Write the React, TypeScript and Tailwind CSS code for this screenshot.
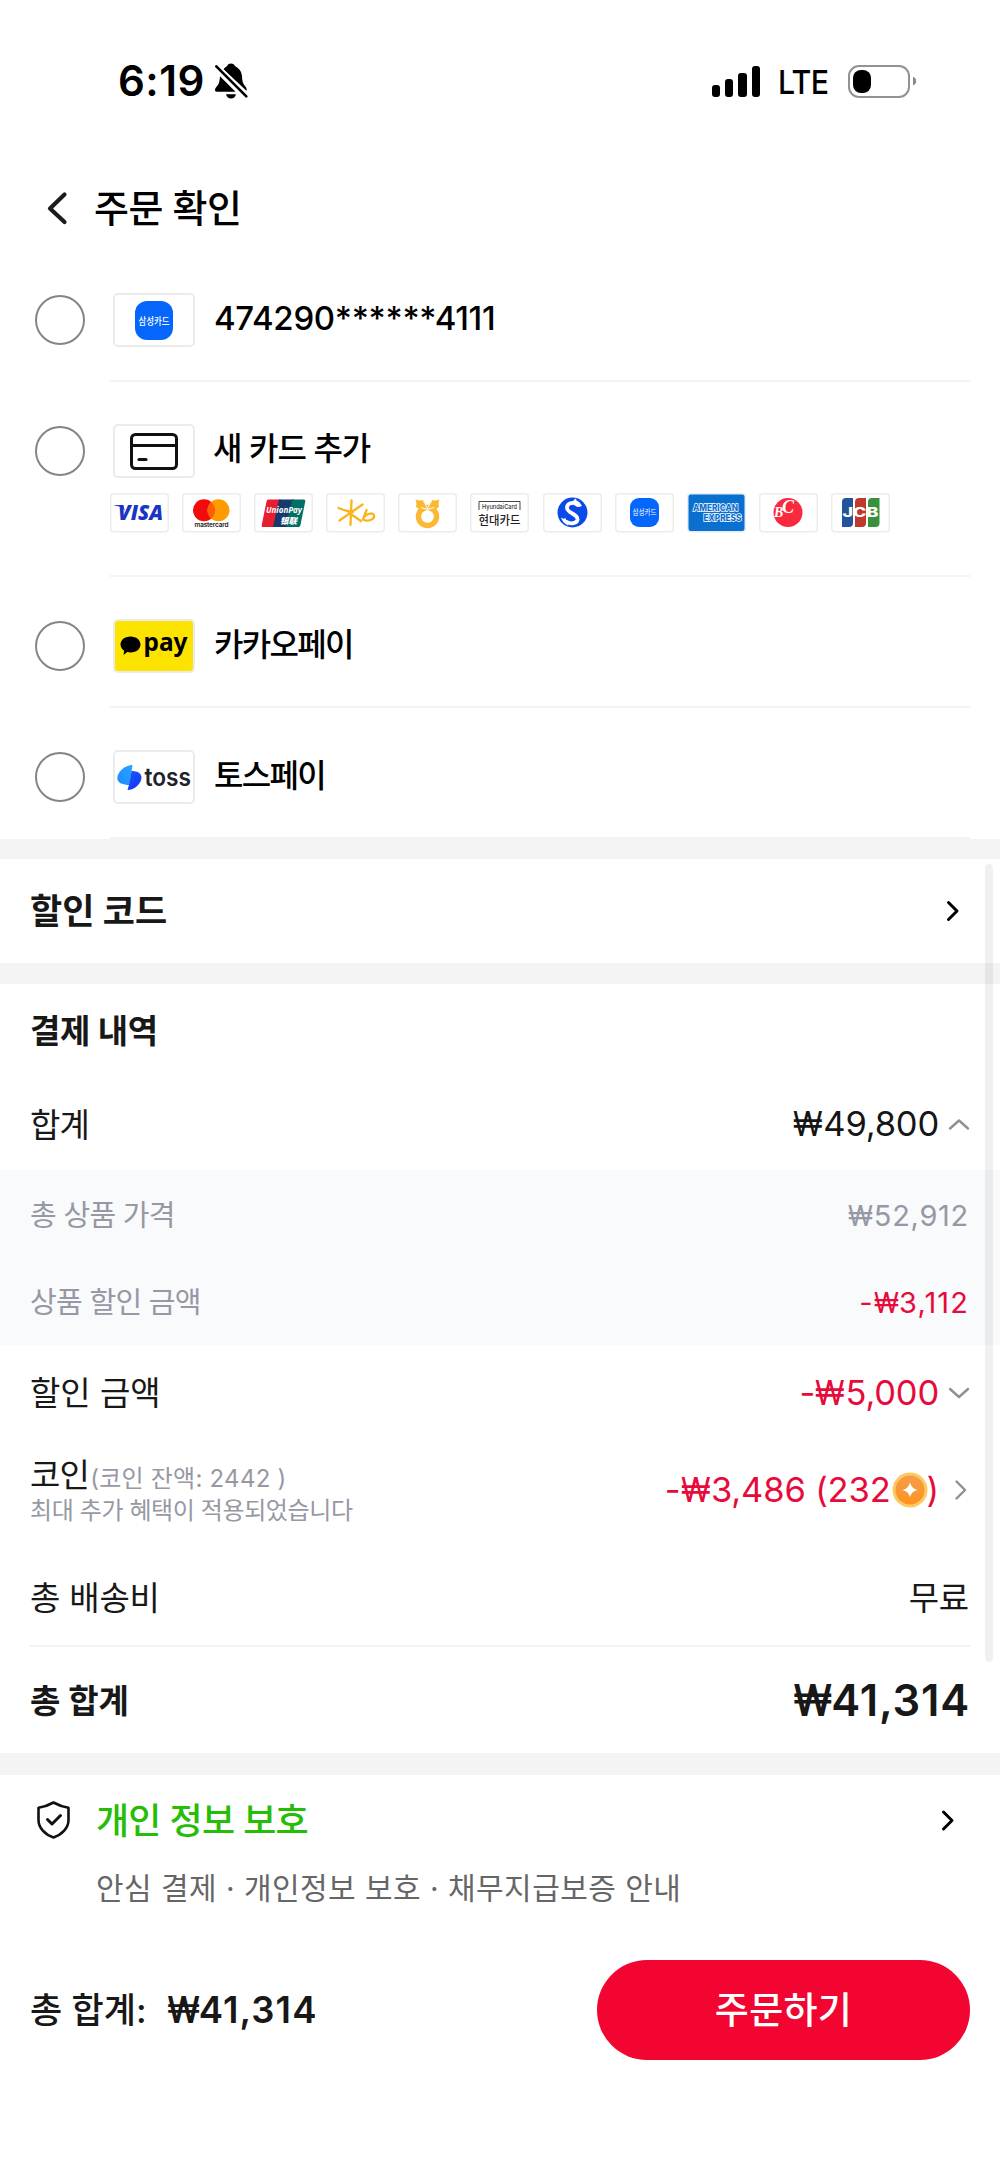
import React from "react";

const KR = "font-['Inter','Noto_Sans_CJK_KR',sans-serif]";

function Chevron({ dir, className }: { dir: "left" | "right" | "up" | "down"; className: string }) {
  const d = {
    left: "M16.5 1.5 L2 15.5 L16.5 29",
    right: "M1.5 1.5 L10 10 L1.5 18.5",
    up: "M1 9.5 L10 1.5 L19 9.5",
    down: "M1 1 L10 9 L19 1",
  }[dir];
  const box = { left: "0 0 18 31", right: "0 0 12 20", up: "0 0 20 11", down: "0 0 20 11" }[dir];
  return (
    <svg viewBox={box} className={`overflow-visible ${className}`} fill="none" stroke="currentColor" strokeLinecap="round" strokeLinejoin="round">
      <path d={d} />
    </svg>
  );
}

/* Korean won sign, drawn a little narrower than the font's own glyph */
function Won() {
  return <span className="inline-block w-[0.880em] origin-left scale-x-[0.900]">₩</span>;
}

function StatusBar() {
  return (
    <div className="flex h-[162px] items-center pr-[84px] pl-[118px] text-black">
      <span className="text-[42px] font-semibold leading-none tracking-[0.500px]">6:19</span>
      <svg viewBox="0 0 34 36" className="ml-[9px] h-[36px] w-[34px]" fill="currentColor">
        <path d="M9.5 6.2C11 4.3 12.600 3.700 13.200 2.800C14 1.200 15.200.5 17 .5s3 .7 3.800 2.300c.5.9 6.700 3 7.200 10.500c.2 4 .6 6.200 1.700 8c1 1.500 3 3.200 3 5.200c0 .5-.1.8-.3 1.200z" />
        <path d="M6 13.300L21.500 28.700H3C1.500 28.700 1 27.900 1 27c0-2.600 2.400-3.600 3.500-6c.9-2 1.200-4 1.500-7.700z" />
        <path d="M12 31.200h10c-.6 2.700-2.500 4.300-5 4.300s-4.400-1.600-5-4.300z" />
        <path d="M2.300 3.300L32.300 33.300" stroke="white" strokeWidth="5.500" />
        <path d="M2.300 3.300L32.300 33.300" stroke="currentColor" strokeWidth="2.600" strokeLinecap="round" />
      </svg>
      <div className="ml-auto flex items-center">
        <div className="flex h-[31px] items-end gap-[4.800px]">
          <i className="h-[12px] w-[8.500px] rounded-[3px] bg-black" />
          <i className="h-[17.500px] w-[8.500px] rounded-[3px] bg-black" />
          <i className="h-[24px] w-[8.500px] rounded-[3px] bg-black" />
          <i className="h-[31px] w-[8.500px] rounded-[3px] bg-black" />
        </div>
        <span className="mt-[3px] ml-[18px] w-[70px]">
          <span className="inline-block origin-left scale-x-[0.920] text-[33px] font-medium leading-none tracking-[-0.800px]">LTE</span>
        </span>
        <div className="flex h-[33px] w-[62px] items-center rounded-[11px] border-2 border-[#929292] pl-[3px]">
          <i className="h-[23px] w-[18px] rounded-[8px] bg-black" />
        </div>
        <svg viewBox="0 0 4 10" className="ml-[2.500px] h-[10px] w-[3.500px]" fill="#8a8a8a">
          <path d="M0 0C5 1.500 5 8.500 0 10z" />
        </svg>
      </div>
    </div>
  );
}

function LogoBox({ children, className = "" }: { children: React.ReactNode; className?: string }) {
  return (
    <div className={`ml-[28px] flex h-[54px] w-[82px] shrink-0 items-center justify-center rounded-[5px] border-2 border-[#ebebeb] ${className}`}>
      {children}
    </div>
  );
}

function PayRow({ logo, label, children }: { logo: React.ReactNode; label: React.ReactNode; children?: React.ReactNode }) {
  return (
    <div className={children ? "h-[195px]" : "h-[131px]"}>
      <div className="flex h-[96px] items-center pt-[42px] pl-[35px]">
        <span className="size-[50px] shrink-0 rounded-full border-2 border-[#858585]" />
        {logo}
        {label}
      </div>
      <div className={`ml-[110px] mr-[30px] border-b-2 border-[#f4f4f4] ${children ? "h-[99px] pt-[15px]" : "h-[35px]"}`}>{children}</div>
    </div>
  );
}

function Brand({ children, bare }: { children: React.ReactNode; bare?: boolean }) {
  return (
    <svg viewBox="0 0 59 39.500" className="h-[39.500px] w-[59px] overflow-visible">
      <rect x="0.750" y="0.750" width="57.500" height="38" rx="3" fill={bare ? "#0a70cf" : "white"} stroke={bare ? "#e4eef8" : "#ececec"} strokeWidth="1.500" />
      {children}
    </svg>
  );
}

function Brands() {
  return (
    <div className="flex gap-[13.100px]">
      <Brand>
        <text x="8" y="26.500" textLength="45" lengthAdjust="spacingAndGlyphs" fontFamily="Open Sans" fontWeight="800" fontStyle="italic" fontSize="21" fill="#1a34c4">VISA</text>
        <path d="M4.500 12h8.500l2 6C12.500 14.500 9 13 4.500 12.600z" fill="#1a34c4" />
      </Brand>
      <Brand>
        <circle cx="22" cy="17.300" r="11" fill="#f50a0c" />
        <circle cx="36.500" cy="17.300" r="11" fill="#ff9a00" />
        <path d="M29.250 9a11 11 0 0 1 0 16.600a11 11 0 0 1 0-16.600z" fill="#ff5c05" />
        <text x="12.500" y="33.500" textLength="34" fontFamily="Inter" fontWeight="600" fontSize="6.500" fill="#222">mastercard</text>
      </Brand>
      <Brand>
        <path d="M14.500 6.500H27L21 34H9.500c-1.500 0-2-1-1.700-2.300L12.500 8.500c.3-1.300 1-2 2-2z" fill="#e61e2f" />
        <path d="M25 6.500H40L34 34H19z" fill="#15396b" />
        <path d="M38 6.500h11.500c1.500 0 2 1 1.700 2.300L46.500 31.700c-.3 1.500-1 2.300-2.200 2.300H32z" fill="#007066" />
        <text x="12" y="19.500" textLength="36" lengthAdjust="spacingAndGlyphs" fontFamily="Open Sans" fontWeight="700" fontStyle="italic" fontSize="9.500" fill="white">UnionPay</text>
        <text x="26" y="30.500" textLength="17" lengthAdjust="spacingAndGlyphs" fontFamily="Noto Sans CJK SC" fontWeight="900" fontStyle="italic" fontSize="8.500" fill="white">银联</text>
      </Brand>
      <Brand>
        <g fill="none" stroke="#fbb41a" strokeWidth="2.300" strokeLinecap="round" strokeLinejoin="round">
          <path d="M25.500 7.500L24.500 32M12.500 15C18 17.500 23 18.500 27 19M36.500 11.500L13.500 27.500M23 20L35 28M40.500 17L37 26.500C43 29.500 49 25.500 48 22.500C47 19.500 42 20 38.500 23.500" />
        </g>
      </Brand>
      <Brand>
        <circle cx="29.500" cy="23.500" r="9" fill="none" stroke="#fbb933" strokeWidth="5.500" />
        <path d="M17.500 6.500c3.500 1.300 6 1 7.500.2l4.500 7 4.500-7c2 .8 4 1.100 7.500-.2-1 2.500-1 5-.5 7.500L38 16H21l-3-2c.5-2.500.5-5-.5-7.500z" fill="#fbb933" />
        <path d="M24.500 6l5 9.500 5-9.500M23 14.500l6.500 2 6.500-2" fill="none" stroke="white" strokeWidth="1" />
        <circle cx="29.500" cy="23.500" r="6" fill="white" />
      </Brand>
      <Brand>
        <path d="M9 17V8.500H50V17" fill="none" stroke="#444" strokeWidth="1" />
        <text x="12" y="16" textLength="35" lengthAdjust="spacingAndGlyphs" fontFamily="Inter" fontWeight="500" fontSize="6.500" fill="#333">HyundaiCard</text>
        <text x="8.500" y="31.500" textLength="42" lengthAdjust="spacingAndGlyphs" fontFamily="Noto Sans CJK KR" fontWeight="500" fontSize="12" fill="#222">현대카드</text>
      </Brand>
      <Brand>
        <circle cx="29.500" cy="19.500" r="15" fill="#0a4ae8" />
        <path d="M34.500 12C30 7.500 22 11 24.500 16.500C26.500 20.500 35 21.500 34.500 26.500C34 30.500 28 31.500 24 29" fill="none" stroke="white" strokeWidth="3.800" strokeLinecap="round" />
        <path d="M29 9.500c2-3 3-3.500 4-4l.5 2c2 .5 4 2.500 5.500 5.500l-3 1-3.500-1.500zM18 24.500l3 1.500 1-1.500 1.500 3 3 1-1.500 4c-3.500-1.500-6-4.500-7-8z" fill="white" />
      </Brand>
      <Brand>
        <rect x="15" y="5" width="29" height="29" rx="9" fill="#0566fb" />
        <text x="17.500" y="22.300" textLength="24" lengthAdjust="spacingAndGlyphs" fontSize="7.500" fill="white" fontFamily="Noto Sans CJK KR">삼성카드</text>
      </Brand>
      <Brand bare>
        <text x="6" y="17.500" textLength="45" lengthAdjust="spacingAndGlyphs" fontFamily="Inter" fontWeight="800" fontSize="9" fill="#0a70cf" stroke="white" strokeWidth="1.500" paintOrder="stroke">AMERICAN</text>
        <text x="16.500" y="28" textLength="38" lengthAdjust="spacingAndGlyphs" fontFamily="Inter" fontWeight="800" fontSize="9" fill="#0a70cf" stroke="white" strokeWidth="1.500" paintOrder="stroke">EXPRESS</text>
      </Brand>
      <Brand>
        <circle cx="29" cy="19.500" r="14.500" fill="#f9293e" />
        <text x="15" y="24" fontFamily="Liberation Serif" fontWeight="700" fontStyle="italic" fontSize="14" fill="white">B</text>
        <text x="23" y="20" fontFamily="Liberation Serif" fontWeight="700" fontStyle="italic" fontSize="18" fill="white">C</text>
      </Brand>
      <Brand>
        <path d="M15 5h7v25q0 4-4 4h-7V9q0-4 4-4z" fill="#24539a" />
        <path d="M28 5h7v25q0 4-4 4h-7V9q0-4 4-4z" fill="#bf3a2d" />
        <path d="M41 5h7.500v25q0 4-4 4H37V9q0-4 4-4z" fill="#37913e" />
        <text x="11.500" y="24" textLength="36" lengthAdjust="spacingAndGlyphs" fontFamily="Inter" fontWeight="800" fontSize="12.500" fill="white">JCB</text>
      </Brand>
    </div>
  );
}

function Band({ className }: { className: string }) {
  return <div className={`bg-[#f4f4f4] ${className}`} />;
}

function Coin() {
  return (
    <svg viewBox="0 0 36 36" className="mr-[-1px] ml-[1px] size-[36px]">
      <defs>
        <linearGradient id="coin" x1="0" y1="0" x2="0" y2="1">
          <stop offset="0" stopColor="#f79c4a" />
          <stop offset="1" stopColor="#fd9321" />
        </linearGradient>
      </defs>
      <circle cx="18" cy="18" r="17.500" fill="#fcca60" />
      <circle cx="18" cy="18" r="14.500" fill="url(#coin)" />
      <path d="M18 10.500Q19.300 16.700 25.500 18Q19.300 19.300 18 25.500Q16.700 19.300 10.500 18Q16.700 16.700 18 10.500z" fill="white" />
    </svg>
  );
}

export default function App() {
  return (
    <div className={`relative h-[2174px] w-[1000px] overflow-hidden bg-white text-[#181818] whitespace-nowrap leading-none ${KR}`}>
      <StatusBar />
      <header className="flex h-[89px] items-center pl-[48px] text-black">
        <Chevron dir="left" className="mt-[4px] h-[31px] w-[18px] stroke-[4.200] text-[#1c1c1c]" />
        <h1 className="mt-[3px] ml-[28px] text-[38px] font-medium tracking-[-0.500px]">주문 확인</h1>
      </header>

      <section className="text-black">
        <PayRow
          logo={
            <LogoBox>
              <svg viewBox="0 0 38 39" className="h-[39px] w-[38px] overflow-visible">
                <rect width="38" height="39" rx="12" fill="#0566fb" />
                <text x="3.500" y="23.500" textLength="31" lengthAdjust="spacingAndGlyphs" fontSize="10" fontWeight="500" fill="white" fontFamily="Noto Sans CJK KR">삼성카드</text>
              </svg>
            </LogoBox>
          }
          label={<span className="-mt-[4px] ml-[19px] text-[33px] font-medium tracking-[-0.300px]">474290******4111</span>}
        />
        <PayRow
          logo={
            <LogoBox>
              <svg viewBox="0 0 48 37" className="h-[37px] w-[48px]" fill="none" stroke="#111" strokeLinecap="round">
                <rect x="1.500" y="1.500" width="45" height="34" rx="4" strokeWidth="3" />
                <path d="M2 12.500H46" strokeWidth="3" />
                <path d="M9 26.500H16" strokeWidth="3.200" />
              </svg>
            </LogoBox>
          }
          label={<span className="-mt-[4px] ml-[18px] text-[32px] font-medium tracking-[-1px]">새 카드 추가</span>}
        >
          <Brands />
        </PayRow>
        <PayRow
          logo={
            <LogoBox className="bg-[#fde400]">
              <svg viewBox="0 0 78 50" className="h-[50px] w-[78px] overflow-visible">
                <path d="M15.500 15.500c5.800 0 10 3.600 10 8s-4.200 8-10 8c-1.100 0-2.200-.1-3.200-.4L8.500 34l.7-4.200C7 28.300 5.500 26 5.500 23.500c0-4.400 4.200-8 10-8z" fill="black" />
                <text x="28.500" y="30" textLength="44" lengthAdjust="spacingAndGlyphs" fontFamily="Noto Sans" fontWeight="700" fontSize="25" fill="black">pay</text>
              </svg>
            </LogoBox>
          }
          label={<span className="-mt-[3px] ml-[19px] text-[32px] font-medium tracking-[-1.700px]">카카오페이</span>}
        />
        <PayRow
          logo={
            <LogoBox>
              <svg viewBox="0 0 78 50" className="h-[50px] w-[78px] overflow-visible">
                <defs>
                  <linearGradient id="tossA" x1="0" y1="1" x2="1" y2="0"><stop stopColor="#1d8bff" /><stop offset="1" stopColor="#2aa4ff" /></linearGradient>
                  <linearGradient id="tossB" x1="0" y1="0" x2="0.500" y2="1"><stop stopColor="#0f5cff" /><stop offset="1" stopColor="#1a35f5" /></linearGradient>
                </defs>
                <path d="M17.500 13L14.500 33C8 33 2.300 31 2.300 26C2.300 20 10 13.200 17.500 13z" fill="url(#tossA)" />
                <path d="M16.500 19C22 19 26.500 21 26.500 25.500C26.500 31.500 19.500 38 12.500 38L14.500 31z" fill="url(#tossB)" />
                <text x="29.500" y="33.500" textLength="46.500" lengthAdjust="spacingAndGlyphs" fontFamily="Inter" fontWeight="600" fontSize="24.500" fill="#20232b">toss</text>
              </svg>
            </LogoBox>
          }
          label={<span className="-mt-[3px] ml-[19px] text-[32px] font-medium tracking-[-1.700px]">토스페이</span>}
        />
      </section>

      <Band className="h-[20px]" />
      <section className="flex h-[104px] items-center justify-between pr-[41px] pl-[30px]">
        <h2 className="text-[35px] font-bold">할인 코드</h2>
        <Chevron dir="right" className="h-[20px] w-[12px] stroke-[3] text-black" />
      </section>
      <Band className="h-[21px]" />

      <section>
        <h2 className="flex h-[93px] items-center pt-[2px] pl-[30px] text-[33px] font-bold tracking-[-0.300px]">결제 내역</h2>
        <div className="flex h-[93px] items-center justify-between pr-[31px] pl-[30px]">
          <span className="mt-[3px] text-[33px] tracking-[-0.800px]">합계</span>
          <span className="flex items-center pt-[2px] text-[34.500px] tracking-[-0.200px] text-[#151515]">
            <Won />49,800
            <Chevron dir="up" className="ml-[10px] h-[11px] w-[20px] stroke-[2.400] text-[#8d8f99]" />
          </span>
        </div>
        <div className="bg-[#f8fafc] pr-[31px] pl-[30px] text-[#9698a4]">
          <div className="flex h-[87.500px] items-center justify-between pt-[3px] text-[29px]">
            <span className="tracking-[-0.700px]">총 상품 가격</span>
            <span className="tracking-[0.700px]"><Won />52,912</span>
          </div>
          <div className="flex h-[87.500px] items-center justify-between pt-[3px] text-[29px]">
            <span className="tracking-[-0.700px]">상품 할인 금액</span>
            <span className="tracking-[1.100px] text-[#e60b3a]">-<Won />3,112</span>
          </div>
        </div>
        <div className="flex h-[96px] items-center justify-between pr-[31px] pl-[30px]">
          <span className="text-[33px]">할인 금액</span>
          <span className="flex items-center text-[34.500px] tracking-[-0.200px] text-[#e60b3a]">
            -<Won />5,000
            <Chevron dir="down" className="ml-[10px] h-[11px] w-[20px] stroke-[2.400] text-[#8d8f99]" />
          </span>
        </div>
        <div className="flex h-[98px] items-center justify-between pr-[33px] pl-[30px]">
          <div className="pt-[2px]">
            <div className="flex items-baseline">
              <span className="text-[33px] tracking-[-0.800px]">코인</span>
              <span className="ml-[1px] text-[24px] tracking-[0.250px] text-[#9698a4]">(코인 잔액: 2442 )</span>
            </div>
            <div className="mt-[7px] text-[24px] tracking-[-0.400px] text-[#9698a4]">최대 추가 혜택이 적용되었습니다</div>
          </div>
          <span className="flex items-center text-[34.500px] tracking-[-0.150px] text-[#e60b3a]">
            -<Won />3,486 (232
            <Coin />)
            <Chevron dir="right" className="ml-[16px] h-[20px] w-[12px] stroke-[2.400] text-[#8d8f99]" />
          </span>
        </div>
        <div className="flex h-[106px] items-center justify-between pt-[13px] pr-[31px] pl-[30px] text-[33px] tracking-[-0.200px]">
          <span>총 배송비</span>
          <span>무료</span>
        </div>
        <div className="mx-[30px] h-[2px] bg-[#f3f3f3]" />
        <div className="flex h-[106px] items-center justify-between pr-[30px] pl-[30px]">
          <span className="pt-[2px] text-[33px] font-bold">총 합계</span>
          <span className="pt-[2px] text-[43.500px] font-semibold tracking-[0.800px]"><Won />41,314</span>
        </div>
      </section>
      <Band className="h-[22px]" />

      <section className="pt-[20px]">
        <div className="flex h-[50px] items-center pr-[46px] pl-[37px]">
          <svg viewBox="0 0 33 38" className="h-[38px] w-[33px]" fill="none" stroke="#111" strokeLinejoin="round" strokeLinecap="round">
            <path d="M16.500 1.500C21 4 26 6 31.500 6.800V19C31.500 27 25 33.500 16.500 36.500C8 33.500 1.500 27 1.500 19V6.800C7 6 12 4 16.500 1.500z" strokeWidth="2.600" />
            <path d="M10.500 18.500L15 23L23.500 14.500" strokeWidth="3" />
          </svg>
          <h3 className="mt-[2px] ml-[26px] text-[36px] font-medium tracking-[-0.750px] text-[#25bd05]">개인 정보 보호</h3>
          <Chevron dir="right" className="ml-auto h-[21px] w-[12px] stroke-[3] text-black" />
        </div>
        <p className="mt-[18px] pl-[96px] text-[30px] leading-[50px] tracking-[0.450px] text-[#666]">안심 결제 · 개인정보 보호 · 채무지급보증 안내</p>
      </section>

      <footer className="mt-[47px] flex h-[100px] items-center pr-[30px] pl-[30px]">
        <span className="text-[35px] font-medium">총 합계:</span>
        <span className="ml-[20px] text-[36.500px] font-semibold tracking-[1.100px]"><Won />41,314</span>
        <button className="ml-auto h-[100px] w-[373px] rounded-full bg-[#f20530] text-[37px] font-medium tracking-[0.300px] text-white">주문하기</button>
      </footer>
      <div className="absolute top-[864px] right-[7px] h-[798px] w-[8px] rounded-full bg-black/6" />
    </div>
  );
}
